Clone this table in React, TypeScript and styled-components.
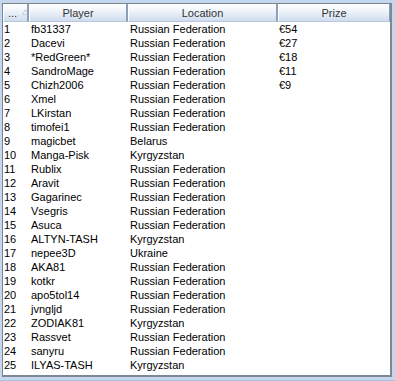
import React from "react";
import styled, {createGlobalStyle} from "styled-components";

const GlobalStyle = createGlobalStyle`
  html, body {
    margin: 0;
    padding: 0;
    background: #c4d7ef;
    font-family: "Liberation Sans", Arial, sans-serif;
  }
`;

const Window = styled.div`
  width: 395px;
  height: 381px;
  box-sizing: border-box;
  padding: 3px 3px 3px 2px;
  background: #c4d7ef;
  border-bottom: 1px solid #a9c0de;
`;

const Frame = styled.div`
  height: 100%;
  box-sizing: border-box;
  background: #fff;
  border-top: 1px solid #7b8590;
  border-left: 1px solid #7b8590;
  border-right: 2px solid #7e8892;
  border-bottom: 2px solid #7e8892;
  overflow: hidden;
`;

const Grid = styled.div`
  display: grid;
  grid-template-columns: 26px 99px 150px 1fr;
  grid-template-rows: 18px;
  grid-auto-rows: 14px;
`;

const HeaderCell = styled.div<{ $first?: boolean }>`
  height: 18px;
  box-sizing: border-box;
  display: flex;
  align-items: center;
  justify-content: ${p => (p.$first ? "flex-start" : "center")};
  padding-left: ${p => (p.$first ? "4px" : "0")};
  gap: 5px;
  font-size: 11px;
  color: #333;
  background: linear-gradient(#ffffff 0%, #f2f6fb 35%, #cfdcee 100%);
  border-left: 1px solid #ffffff;
  border-right: 2px solid #8d9fb6;
  border-bottom: 1px solid #b8c8dc;
  overflow: hidden;
  &:last-of-type {
    border-right: 1px solid #8d9fb6;
  }
`;

const HeaderRow = styled.div`
  display: contents;
`;

const Cell = styled.div<{ $pad?: number }>`
  height: 14px;
  line-height: 14px;
  font-size: 11px;
  color: #000;
  white-space: nowrap;
  overflow: hidden;
  padding-left: ${p => p.$pad ?? 2}px;
`;

const SortArrow = styled.svg`
  flex: none;
  width: 7px;
  height: 6px;
  margin-top: -1px;
`;

type Row = [string, string, string?];

const rows: Row[] = [
    ["fb31337", "Russian Federation", "€54"],
    ["Dacevi", "Russian Federation", "€27"],
    ["*RedGreen*", "Russian Federation", "€18"],
    ["SandroMage", "Russian Federation", "€11"],
    ["Chizh2006", "Russian Federation", "€9"],
    ["Xmel", "Russian Federation"],
    ["LKirstan", "Russian Federation"],
    ["timofei1", "Russian Federation"],
    ["magicbet", "Belarus"],
    ["Manga-Pisk", "Kyrgyzstan"],
    ["Rublix", "Russian Federation"],
    ["Aravit", "Russian Federation"],
    ["Gagarinec", "Russian Federation"],
    ["Vsegris", "Russian Federation"],
    ["Asuca", "Russian Federation"],
    ["ALTYN-TASH", "Kyrgyzstan"],
    ["nepee3D", "Ukraine"],
    ["AKA81", "Russian Federation"],
    ["kotkr", "Russian Federation"],
    ["apo5tol14", "Russian Federation"],
    ["jvngljd", "Russian Federation"],
    ["ZODIAK81", "Kyrgyzstan"],
    ["Rassvet", "Russian Federation"],
    ["sanyru", "Russian Federation"],
    ["ILYAS-TASH", "Kyrgyzstan"],
];

const App = () => {
    return (
        <>
            <GlobalStyle/>
            <Window>
                <Frame>
                    <Grid>
                        <HeaderRow>
                            <HeaderCell $first>
                                ...
                                <SortArrow viewBox="0 0 7 6">
                                    <path d="M3.5 0.5 L6.5 5.5 L0.5 5.5 Z" fill="#eef2f7" stroke="#c3cdd9" strokeWidth="1"/>
                                </SortArrow>
                            </HeaderCell>
                            <HeaderCell>Player</HeaderCell>
                            <HeaderCell>Location</HeaderCell>
                            <HeaderCell>Prize</HeaderCell>
                        </HeaderRow>
                        {rows.map(([player, location, prize], i) => (
                            <React.Fragment key={i}>
                                <Cell $pad={1}>{i + 1}</Cell>
                                <Cell>{player}</Cell>
                                <Cell>{location}</Cell>
                                <Cell $pad={1}>{prize ?? ""}</Cell>
                            </React.Fragment>
                        ))}
                    </Grid>
                </Frame>
            </Window>
        </>
    );
};

export default App;
